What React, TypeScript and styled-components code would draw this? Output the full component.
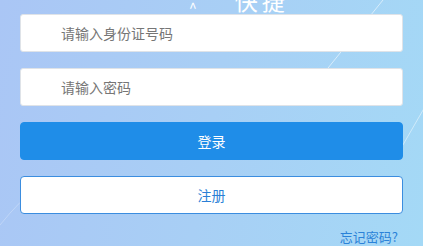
import styled, { createGlobalStyle } from "styled-components";

const GlobalStyle = createGlobalStyle`
  html, body {
    margin: 0;
    padding: 0;
  }
  body {
    font-family: "Noto Sans CJK SC", "Noto Sans", sans-serif;
  }
`;

const Page = styled.div`
  position: relative;
  width: 423px;
  height: 246px;
  overflow: hidden;
  background: linear-gradient(100deg, #aac6f5 0%, #a8cff5 50%, #a4d9f6 100%);
`;

const Decor = styled.svg`
  position: absolute;
  inset: 0;
  pointer-events: none;
`;

const Heading = styled.div`
  position: absolute;
  top: -17px;
  left: 189px;
  display: flex;
  align-items: center;
  gap: 34px;
  color: #ffffff;
  font-size: 23px;
  letter-spacing: 4px;
`;

const Caret = styled.span`
  font-size: 14px;
  margin-top: 14px;
`;

const Form = styled.div`
  position: relative;
  display: flex;
  flex-direction: column;
  padding: 14px 20px 0;
`;

const Field = styled.input`
  box-sizing: border-box;
  display: block;
  height: 38px;
  width: 100%;
  padding: 0 0 0 40px;
  margin: 0 0 16px;
  border: 1px solid #dfe3e8;
  border-radius: 3px;
  background: #ffffff;
  font-family: inherit;
  font-size: 14px;
  color: #333;
  outline: none;

  &::placeholder {
    color: #767676;
  }
`;

const Button = styled.button<{ $primary?: boolean }>`
  box-sizing: border-box;
  display: block;
  height: 38px;
  width: 100%;
  margin: 0 0 16px;
  border-radius: 4px;
  border: 1px solid ${(p) => (p.$primary ? "#1f8de8" : "#3b8ddf")};
  background: ${(p) => (p.$primary ? "#1f8de8" : "#ffffff")};
  color: ${(p) => (p.$primary ? "#ffffff" : "#2a7fd6")};
  font-family: inherit;
  font-size: 14px;
  cursor: pointer;
`;

const Forgot = styled.a`
  align-self: flex-end;
  margin-right: 5px;
  color: #2b82d8;
  font-size: 13px;
  line-height: 14px;
  text-decoration: none;
`;

export default function App() {
  return (
    <>
      <GlobalStyle />
      <Page>
        <Decor width="423" height="246" viewBox="0 0 423 246">
          <line x1="383" y1="0" x2="328" y2="68" stroke="#ffffff" strokeOpacity="0.7" strokeWidth="0.8" />
          <line x1="430" y1="98" x2="400" y2="150" stroke="#ffffff" strokeOpacity="0.6" strokeWidth="0.8" />
          <path d="M0 225 Q 20 200 40 185" stroke="#ffffff" strokeOpacity="0.25" strokeWidth="1" fill="none" />
        </Decor>
        <Heading>
          <Caret>^</Caret>
          <span>快捷</span>
        </Heading>
        <Form>
          <Field placeholder="请输入身份证号码" />
          <Field type="password" placeholder="请输入密码" />
          <Button $primary>登录</Button>
          <Button>注册</Button>
          <Forgot href="#">忘记密码?</Forgot>
        </Form>
      </Page>
    </>
  );
}
